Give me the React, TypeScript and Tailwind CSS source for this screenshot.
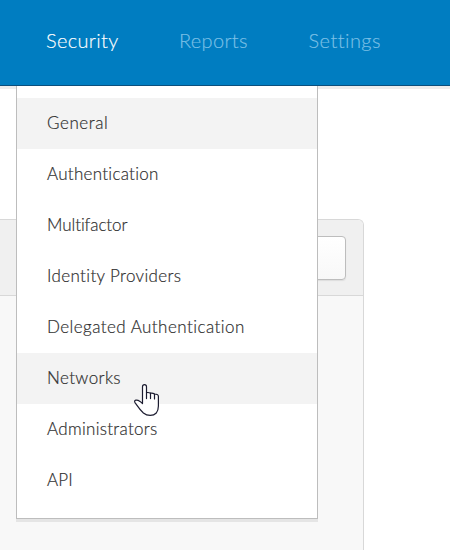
type NavItem = { label: string; className: string };
type MenuItem = { label: string; tracking: string; highlighted?: boolean };

const navItems: NavItem[] = [
  { label: 'Security', className: 'w-[133px] text-white tracking-[0.34px]' },
  { label: 'Reports', className: 'w-[129.5px] text-[#7cc0e6] tracking-[0.32px]' },
  { label: 'Settings', className: 'text-[#7cc0e6] tracking-[0.45px]' },
];

const menuItems: MenuItem[] = [
  { label: 'General', tracking: 'tracking-[0.58px]', highlighted: true },
  { label: 'Authentication', tracking: 'tracking-[0.28px]' },
  { label: 'Multifactor', tracking: 'tracking-[-0.08px]' },
  { label: 'Identity Providers', tracking: 'tracking-[0.36px]' },
  { label: 'Delegated Authentication', tracking: 'tracking-[0.45px]' },
  { label: 'Networks', tracking: 'tracking-[0.38px]', highlighted: true },
  { label: 'Administrators', tracking: 'tracking-[0.3px]' },
  { label: 'API', tracking: 'tracking-[0.2px]' },
];

function HandCursor() {
  return (
    <svg
      className="pointer-events-none absolute top-[297px] left-[117px]"
      width="27"
      height="34"
      viewBox="0 0 27 34"
      fill="white"
      stroke="#1c1c30"
      strokeWidth="1.2"
      strokeLinejoin="round"
      strokeLinecap="round"
    >
      <path d="M8.5 20.5 V3.8 Q8.5 1.6 10.5 1.6 Q12.5 1.6 12.5 3.8 V9.6 Q14.8 9.2 16.5 10.2 Q18.8 9.8 20.5 11 Q24.4 11 24.4 13.4 V23 Q24.4 27 22.3 30 Q20 32.4 16.2 32.4 Q12.4 32.4 9.4 30 Q6 26.8 3 22.4 L1 19.6 Q0 17.6 1.8 17.2 Q3.8 16.9 6 18.4 Z" />
      <path d="M12.5 9.6 V15.6 M16.5 10.2 V15.6 M20.5 11 V16" fill="none" />
    </svg>
  );
}

export default function App() {
  return (
    <div className="relative h-[550px] w-[450px] overflow-hidden bg-white font-['Lato','Open_Sans',sans-serif] font-light">
      <header className="h-[86px] border-b border-[#0b4f7d] bg-[#007dc1] shadow-[0_3px_0_#ededed]">
        <nav className="flex pt-[26px] pl-[46px] text-[20px] leading-7 [-webkit-text-stroke:0.15px_currentColor]">
          {navItems.map((item) => (
            <a key={item.label} className={item.className}>
              {item.label}
            </a>
          ))}
        </nav>
      </header>

      <main className="pt-[133px]">
        <section className="h-[400px] w-[364px] rounded-tr-[6px] border-t border-r border-[#d8d8d8] bg-[#f8f8f8]">
          <div className="flex h-[76px] justify-end rounded-tr-[5px] border-b border-[#d8d8d8] bg-[#f0f0f0] pt-4 pr-[17px]">
            <button className="h-11 w-24 rounded-[4px] border border-[#bdbdbd] bg-linear-to-b from-white to-[#f8f8f8] shadow-[0_1px_1px_#dddddd]" />
          </div>
        </section>
      </main>

      <div className="absolute top-[86px] left-4 w-[302px] border-x border-b border-[#bdbdbd] bg-white py-3 shadow-[0_3px_0_#e5e5e5]">
        <ul className="text-[17px] leading-[49px] text-[#303030] [-webkit-text-stroke:0.2px_currentColor]">
          {menuItems.map((item) => (
            <li
              key={item.label}
              className={item.highlighted ? 'h-[51px] bg-[#f3f3f3] pl-[30px]' : 'h-[51px] pl-[30px]'}
            >
              <span className={item.tracking}>{item.label}</span>
            </li>
          ))}
        </ul>
        <HandCursor />
      </div>
    </div>
  );
}
